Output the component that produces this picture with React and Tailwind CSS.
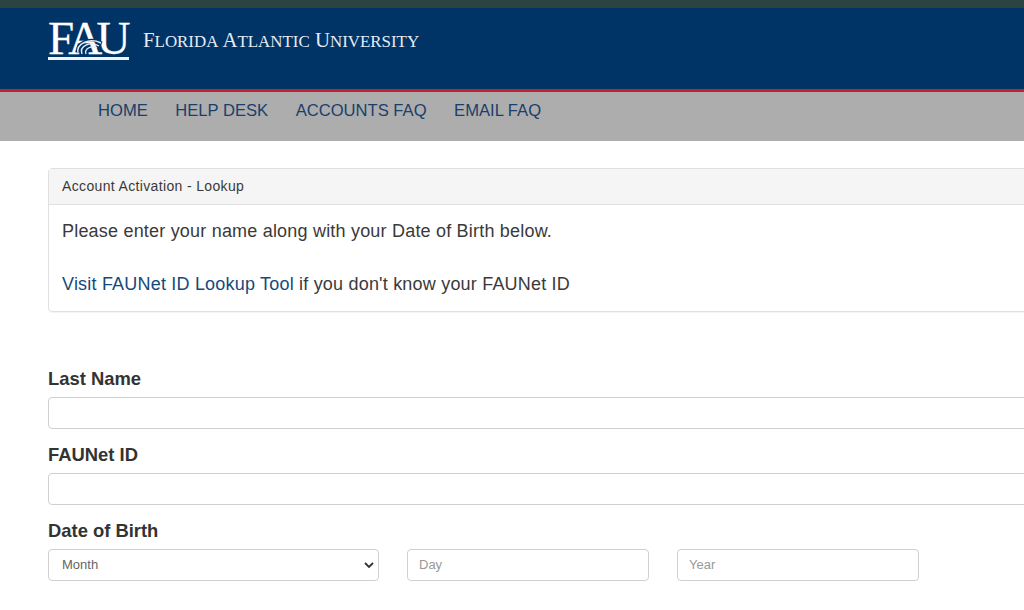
import React from "react";

const navItems = ["HOME", "HELP DESK", "ACCOUNTS FAQ", "EMAIL FAQ"];

const FauLogo = () => (
  <div className="relative w-[84px] h-[40px] text-white font-['Liberation_Serif',serif]">
    <div className="flex items-start h-[33px] text-[47px] leading-[33px] tracking-[-5.8px] [-webkit-text-stroke:0.3px_#fff]">
      <span>F</span>
      <span>A</span>
      <span>U</span>
    </div>
    <div className="mt-[2px] h-[2.5px] w-[81px] bg-[#f0f4f8]" />
    <svg className="absolute left-[27px] top-[15px]" width="30" height="18" viewBox="0 0 30 18" fill="none" stroke="#e8eef4">
      <path d="M3 16C0 6 14 -1 27 6" strokeWidth="2.6" stroke="#003366" />
      <path d="M3 16C1 7 14 0 26 6" strokeWidth="1.4" />
      <path d="M7 17C4 9 15 4 24 9" strokeWidth="1.4" />
      <path d="M11 17C9 12 16 8 22 11" strokeWidth="1.3" />
    </svg>
  </div>
);

const Field = ({ label }) => (
  <div>
    <label className="block h-[31px] text-[18.4px] leading-[26px] font-bold text-[#333]">{label}</label>
    <input
      type="text"
      className="block w-[1000px] h-[32px] bg-white border border-[#d0d0d0] rounded-[4px]"
    />
  </div>
);

export default function App() {
  return (
    <div className="h-[610px] w-[1024px] overflow-hidden bg-white font-['Liberation_Sans',sans-serif] text-[#3a3a3a]">
      <div className="h-[8px] bg-[#2c4441]" />
      <header className="h-[81px] bg-[#003366] pl-[48px] pt-[14px] flex items-start">
        <FauLogo />
        <div className="ml-[11px] mt-[5px] font-['Liberation_Serif',serif] text-[#e6ecf2] text-[20.8px] leading-[26px] whitespace-nowrap">
          F<span className="text-[16.9px]">LORIDA</span> A<span className="text-[16.9px]">TLANTIC</span> U<span className="text-[16.9px]">NIVERSITY</span>
        </div>
      </header>
      <nav className="h-[52px] bg-[#adadad] border-t-[3px] border-[#c1202f] pl-[98px] pt-[6px] flex items-start gap-[27.5px]">
        {navItems.map((item) => (
          <a key={item} className="text-[#1a3f6b] text-[16.6px] leading-[26px] whitespace-nowrap">
            {item}
          </a>
        ))}
      </nav>

      <main className="pl-[48px] pt-[27px]">
        <section className="w-[1000px] h-[144px] border border-[#e0e0e0] rounded-[4px] shadow-[0_1px_1px_rgba(0,0,0,0.05)]">
          <div className="h-[36px] bg-[#f5f5f5] border-b border-[#e0e0e0] pl-[13px] text-[14px] leading-[34px] tracking-[0.35px]">
            Account Activation - Lookup
          </div>
          <div className="pl-[13px] pt-[13px] text-[18px] leading-[26px] tracking-[0.2px]">
            <p>Please enter your name along with your Date of Birth below.</p>
            <p className="mt-[27px]">
              <a className="text-[#144a7a]">Visit FAUNet ID Lookup Tool</a> if you don't know your FAUNet ID
            </p>
          </div>
        </section>

        <form className="mt-[54px] flex flex-col gap-[13px]">
          <Field label="Last Name" />
          <Field label="FAUNet ID" />
          <div>
            <label className="block h-[31px] text-[18.4px] leading-[26px] font-bold text-[#333]">Date of Birth</label>
            <div className="flex gap-[28px]">
              <div className="relative w-[331px]">
                <select className="block appearance-none w-full h-[32px] bg-white border border-[#d0d0d0] rounded-[4px] pl-[13px] text-[13px] text-[#666]">
                  <option>Month</option>
                </select>
                <svg className="absolute right-[5px] top-[13px]" width="10" height="7" viewBox="0 0 10 7" fill="none" stroke="#333" strokeWidth="1.8">
                  <path d="M1 1l4 4 4-4" />
                </svg>
              </div>
              <input
                type="text"
                placeholder="Day"
                className="block w-[242px] h-[32px] border border-[#d0d0d0] rounded-[4px] pl-[11px] pb-[1px] text-[13px] placeholder:text-[#999]"
              />
              <input
                type="text"
                placeholder="Year"
                className="block w-[242px] h-[32px] border border-[#d0d0d0] rounded-[4px] pl-[11px] pb-[1px] text-[13px] placeholder:text-[#999]"
              />
            </div>
          </div>
        </form>
      </main>
    </div>
  );
}
